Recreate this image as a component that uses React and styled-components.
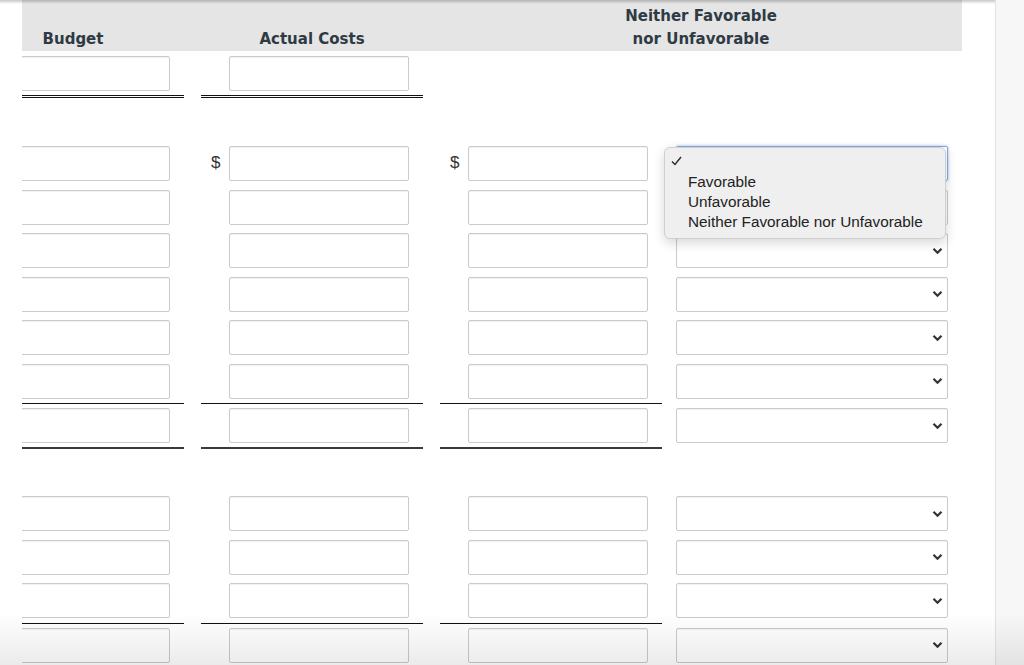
import React from "react";
import styled, { createGlobalStyle } from "styled-components";

const GlobalStyle = createGlobalStyle`
  html, body {
    margin: 0;
    height: 665px;
    overflow: hidden;
    background: #ffffff;
  }
  * { box-sizing: border-box; }
`;

const Page = styled.div`
  display: flex;
  height: 665px;
  position: relative;
`;

const Main = styled.main`
  position: relative;
  width: 996px;
  flex: none;
  border-right: 1px solid #e2e2e2;
  padding-left: 22px;
  overflow: hidden;

  &::before {
    content: "";
    position: absolute;
    top: 0;
    left: 0;
    right: 0;
    height: 4px;
    background: linear-gradient(rgba(0, 0, 0, 0.22), rgba(0, 0, 0, 0));
    z-index: 3;
  }
`;

const Side = styled.aside`
  flex: 1;
  background: #f7f7f7;
`;

const BottomFade = styled.div`
  position: fixed;
  left: 0;
  right: 0;
  bottom: 0;
  height: 52px;
  background: linear-gradient(rgba(0, 0, 0, 0), rgba(0, 0, 0, 0.08));
  pointer-events: none;
  z-index: 4;
`;

const Clip = styled.div`
  overflow: hidden;
  width: 100%;
`;

const Sheet = styled.div`
  position: relative;
  margin-left: -60px;
  width: 1040px;
`;

const HeaderRow = styled.div`
  display: flex;
  height: 51px;
  width: 1000px;
  background: #e5e5e5;
  align-items: flex-end;
`;

const HeadCell = styled.div`
  width: ${(p) => p.$w}px;
  margin-left: ${(p) => p.$ml || 0}px;
  text-align: center;
  font-family: "DejaVu Sans", Verdana, sans-serif;
  font-weight: 700;
  font-size: 15px;
  line-height: 23px;
  color: #2e3a44;
`;

const Row = styled.div`
  display: flex;
  height: ${(p) => p.$h || 43.5}px;
`;

const Spacer = styled.div`
  height: ${(p) => p.$h}px;
`;

const ruleTop = (p) =>
  p.$top ? `border-top: 1px solid ${p.$plain ? "transparent" : "#111"};` : "";

const ruleBottom = (p) => {
  if (p.$bottom === "double")
    return `border-bottom: 3px double ${p.$plain ? "transparent" : "#111"};`;
  if (p.$bottom === "thick")
    return `border-bottom: 2px solid ${p.$plain ? "transparent" : "#3a3a3a"};`;
  return "";
};

const Cell = styled.div`
  display: flex;
  align-items: flex-start;
  width: ${(p) => p.$w || 222}px;
  margin-left: ${(p) => p.$ml || 0}px;
  padding: ${(p) => p.$pt || 4}px 0 0 0;
  ${ruleTop}
  ${ruleBottom}
`;

const Dollar = styled.span`
  width: 28px;
  padding-left: 10px;
  font-family: "Liberation Sans", Arial, sans-serif;
  font-size: 17px;
  line-height: 33px;
  color: #333;
`;

const Input = styled.div`
  width: 180px;
  height: 35px;
  background: #fff;
  border: 1px solid #cbcbcb;
  border-radius: 2px;
  box-shadow: inset 0 1px 1px rgba(0, 0, 0, 0.06);
`;

const SelectBox = styled.div`
  position: relative;
  width: 272px;
  height: 35px;
  background: #fff;
  border: 1px solid ${(p) => (p.$focused ? "#86ade2" : "#cbcbcb")};
  border-radius: 2px;
  box-shadow: ${(p) =>
    p.$focused
      ? "0 0 3px rgba(70, 130, 220, 0.55)"
      : "inset 0 1px 1px rgba(0, 0, 0, 0.06)"};
  display: flex;
  align-items: center;
  justify-content: flex-end;
  padding-right: 4px;
`;

const Chevron = () => (
  <svg width="11" height="8" viewBox="0 0 11 8">
    <path d="M1.5 1.8 L5.5 5.8 L9.5 1.8" fill="none" stroke="#333" strokeWidth="2.2" />
  </svg>
);

const CheckIcon = () => (
  <svg width="11" height="10" viewBox="0 0 11 10">
    <path d="M1 5.5 L4 8.5 L10 1" fill="none" stroke="#2a2a2a" strokeWidth="1.4" />
  </svg>
);

const Popup = styled.ul`
  position: absolute;
  top: 147px;
  left: 702px;
  width: 282px;
  margin: 0;
  padding: 4px 0 6px;
  list-style: none;
  background: #efefef;
  border: 1px solid #cfcfcf;
  border-radius: 6px;
  box-shadow: 0 4px 12px rgba(0, 0, 0, 0.16);
  font-family: "Liberation Sans", Arial, sans-serif;
  font-size: 15.3px;
  line-height: 20px;
  color: #222;
  z-index: 5;
`;

const Option = styled.li`
  position: relative;
  padding-left: 23px;
  height: 20px;
  white-space: nowrap;
`;

const Check = styled.span`
  position: absolute;
  left: 6px;
  top: 4px;
  display: flex;
`;

const AmountCell = ({ dollar, empty, ...rest }) => (
  <Cell {...rest}>
    {dollar ? <Dollar>$</Dollar> : <Dollar />}
    {!empty && <Input />}
  </Cell>
);

const SelectCell = ({ focused, ...rest }) => (
  <Cell $w={286} $ml={14} $plain {...rest}>
    <SelectBox $focused={focused}>
      <Chevron />
    </SelectBox>
  </Cell>
);

const DataRow = ({ dollar, focused, top, bottom }) => (
  <Row $h={top && bottom ? 46 : 43.5}>
    <AmountCell $top={top} $bottom={bottom} />
    <AmountCell $ml={17} dollar={dollar} $top={top} $bottom={bottom} />
    <AmountCell $ml={17} dollar={dollar} $top={top} $bottom={bottom} />
    <SelectCell focused={focused} $top={top} $bottom={bottom} />
  </Row>
);

const options = ["Favorable", "Unfavorable", "Neither Favorable nor Unfavorable"];

export default function App() {
  return (
    <>
      <GlobalStyle />
      <Page>
        <Main>
          <Clip>
            <Sheet>
              <HeaderRow>
                <HeadCell $w={222}>Budget</HeadCell>
                <HeadCell $w={222} $ml={17}>Actual Costs</HeadCell>
                <HeadCell $w={522} $ml={17}>
                  Neither Favorable
                  <br />
                  nor Unfavorable
                </HeadCell>
              </HeaderRow>

              <Row $h={47}>
                <AmountCell $pt={5} $bottom="double" />
                <AmountCell $pt={5} $ml={17} $bottom="double" />
              </Row>
              <Spacer $h={44} />

              <DataRow dollar focused />
              <DataRow />
              <DataRow />
              <DataRow />
              <DataRow />
              <DataRow />
              <DataRow top bottom="thick" />
              <Spacer $h={43} />
              <DataRow />
              <DataRow />
              <DataRow />
              <DataRow top />

              <Popup>
                <Option>
                  <Check>
                    <CheckIcon />
                  </Check>
                </Option>
                {options.map((o) => (
                  <Option key={o}>{o}</Option>
                ))}
              </Popup>
            </Sheet>
          </Clip>
        </Main>
        <Side />
        <BottomFade />
      </Page>
    </>
  );
}
